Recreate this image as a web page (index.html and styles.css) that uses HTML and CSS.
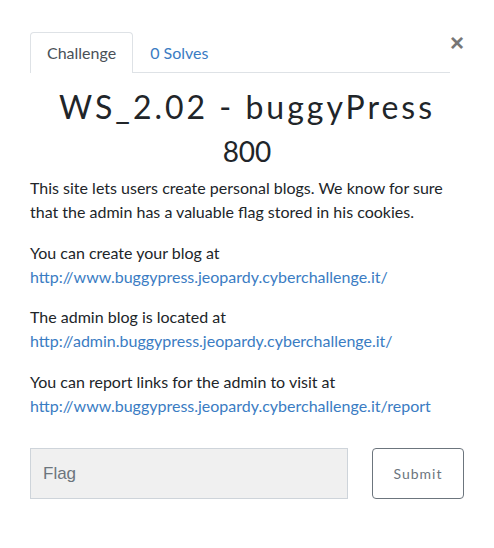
FILE: index.html
```html
<!DOCTYPE html>
<html>
<head>
<meta charset="utf-8">
<link rel="stylesheet" href="styles.css">
</head>
<body>
<div class="modal">
  <button class="close" type="button">&times;</button>
  <ul class="tabs">
    <li class="tab active">Challenge</li>
    <li class="tab">0 Solves</li>
  </ul>
  <h2 class="title">WS_2.02 - buggyPress</h2>
  <h3 class="value">800</h3>
  <div class="desc">
    <p>This site lets users create personal blogs. We know for sure that the admin has a valuable flag stored in his cookies.</p>
    <p>You can create your blog at<br><a href="#">http://www.buggypress.jeopardy.cyberchallenge.it/</a></p>
    <p>The admin blog is located at<br><a href="#">http://admin.buggypress.jeopardy.cyberchallenge.it/</a></p>
    <p>You can report links for the admin to visit at<br><a href="#">http://www.buggypress.jeopardy.cyberchallenge.it/report</a></p>
  </div>
  <form class="submit-row">
    <input class="flag" type="text" placeholder="Flag">
    <button class="submit" type="button">Submit</button>
  </form>
</div>
</body>
</html>
```
FILE: styles.css
```css
html, body {
  margin: 0;
  padding: 0;
  background: #fff;
}
body {
  font-family: Lato, "Noto Sans", sans-serif;
  color: #212529;
}
.modal {
  position: relative;
  width: 434px;
  padding: 32px 30px 0 30px;
}
.close {
  position: absolute;
  top: 31px;
  right: 30px;
  border: 0;
  background: none;
  padding: 0;
  font-family: "Liberation Sans", Arial, sans-serif;
  font-size: 24px;
  font-weight: bold;
  line-height: 24px;
  color: #777;
}
.tabs {
  list-style: none;
  margin: 0 14px 0 0;
  padding: 0;
  display: flex;
  border-bottom: 1px solid #dee2e6;
}
.tab {
  padding: 8px 16px 8px;
  font-size: 16px;
  line-height: 24px;
  color: #3a7cc3;
  border: 1px solid transparent;
  border-bottom: 0;
  border-radius: 4px 4px 0 0;
  margin-bottom: -1px;
}
.tab.active {
  color: #495057;
  border-color: #dee2e6;
  background: #fff;
}
.title {
  margin: 15px 0 0;
  text-align: center;
  font-family: Lato, sans-serif;
  font-weight: 400;
  font-size: 32px;
  line-height: 38px;
  letter-spacing: 3px;
}
.value {
  margin: 8px 0 0;
  text-align: center;
  font-weight: 400;
  font-size: 28px;
  line-height: 34px;
}
.desc {
  margin-top: 8px;
  font-size: 16px;
  line-height: 24.3px;
}
.desc p {
  margin: 0 0 16px;
}
.desc a {
  color: #3a7cc3;
  text-decoration: none;
}
.submit-row {
  display: flex;
  gap: 24px;
  margin-top: 30px;
}
.flag {
  box-sizing: border-box;
  width: 318px;
  height: 51px;
  background: #f0f0f0;
  border: 1px solid #ced4da;
  padding: 0 12px;
  font-family: "Liberation Sans", Arial, sans-serif;
  font-size: 17px;
  color: #495057;
  outline: none;
}
.flag::placeholder {
  color: #6c757d;
}
.submit {
  box-sizing: border-box;
  width: 92px;
  height: 51px;
  background: #fff;
  border: 1px solid #6c757d;
  border-radius: 4px;
  font-family: Lato, sans-serif;
  font-size: 14px;
  letter-spacing: 1px;
  color: #6c757d;
}
```
